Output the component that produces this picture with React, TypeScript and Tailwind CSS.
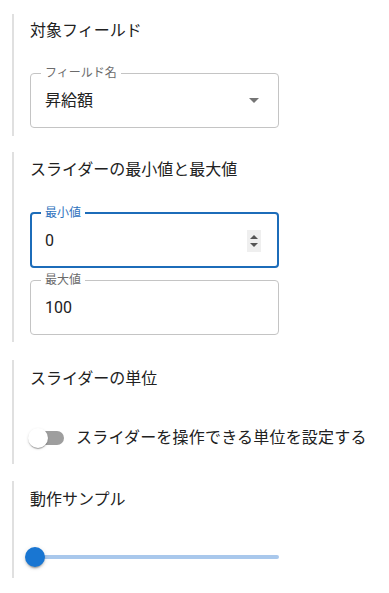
import React from "react";

const font = "font-['Roboto','Noto_Sans_CJK_JP',sans-serif]";

function Section({ title, children, className = "" }: { title: string; children: React.ReactNode; className?: string }) {
  return (
    <section className={`ml-3 border-l-2 border-[#e0e0e0] pl-4 ${className}`}>
      <h3 className="h-6 text-base font-normal leading-6 text-[#212121]">{title}</h3>
      {children}
    </section>
  );
}

function OutlinedField({
  label,
  value,
  focused = false,
  adornment,
  className = "",
}: {
  label: string;
  value: string;
  focused?: boolean;
  adornment?: React.ReactNode;
  className?: string;
}) {
  return (
    <fieldset
      className={`h-[61px] w-[249px] rounded ${
        focused ? "border-2 border-[#1c6cb9] px-[9px]" : "border border-[#c4c4c4] px-[10px]"
      } ${className}`}
    >
      <legend className={`px-[4px] text-xs leading-3 ${focused ? "text-[#2f72bd]" : "text-[#6b6b6b]"}`}>{label}</legend>
      <div className="flex h-[43px] items-center justify-between pl-[4px] pr-[3px]">
        <span className="text-base text-[#212121]">{value}</span>
        {adornment}
      </div>
    </fieldset>
  );
}

export default function App() {
  return (
    <div className={`min-h-[593px] w-[389px] bg-white pt-[14px] ${font}`}>
      <div className="flex flex-col">
        {/* target field */}
        <Section title="対象フィールド" className="pt-[5px] pb-[8px]">
          <OutlinedField
            label="フィールド名"
            value="昇給額"
            className="mt-6"
            adornment={
              <span className="mr-[6px] h-0 w-0 border-x-[5px] border-t-[5px] border-x-transparent border-t-[#757575]" />
            }
          />
        </Section>

        {/* min / max */}
        <Section title="スライダーの最小値と最大値" className="mt-4 pt-[6px] pb-[7px]">
          <OutlinedField
            label="最小値"
            value="0"
            focused
            className="mt-[25px]"
            adornment={
              <span className="mr-[4px] flex h-[22px] w-[14px] flex-col items-center justify-center gap-[4px] bg-[#efefef]">
                <span className="h-0 w-0 border-x-[4px] border-b-[4px] border-x-transparent border-b-[#555]" />
                <span className="h-0 w-0 border-x-[4px] border-t-[4px] border-x-transparent border-t-[#555]" />
              </span>
            }
          />
          <OutlinedField label="最大値" value="100" className="mt-[6px]" />
        </Section>

        {/* unit */}
        <Section title="スライダーの単位" className="mt-[18px] pt-[7px] pb-[7px]">
          <label className="mt-[28px] flex h-[38px] items-center">
            <span className="relative flex h-[38px] w-[46px] shrink-0 items-center">
              <span className="h-[14px] w-[34px] rounded-full bg-[#9e9e9e]" />
              <span className="absolute left-[-2px] top-[9px] h-5 w-5 rounded-full bg-white shadow-[0_2px_1px_-1px_rgba(0,0,0,0.2),0_1px_1px_0_rgba(0,0,0,0.14),0_1px_3px_0_rgba(0,0,0,0.12)]" />
            </span>
            <span className="whitespace-nowrap text-base tracking-[0.2px] text-[#212121]">スライダーを操作できる単位を設定する</span>
          </label>
        </Section>

        {/* sample */}
        <Section title="動作サンプル" className="mt-[17px] pt-[7px] pb-[11px]">
          <div className="relative mt-[35px] flex h-5 w-[249px] items-center">
            <span className="h-1 w-full rounded-full bg-[#a9c8ec]" />
            <span className="absolute left-[-5px] top-0 h-5 w-5 rounded-full bg-[#1976d2] shadow-[0_3px_1px_-2px_rgba(0,0,0,0.2),0_2px_2px_0_rgba(0,0,0,0.14),0_1px_5px_0_rgba(0,0,0,0.12)]" />
          </div>
        </Section>
      </div>
    </div>
  );
}
